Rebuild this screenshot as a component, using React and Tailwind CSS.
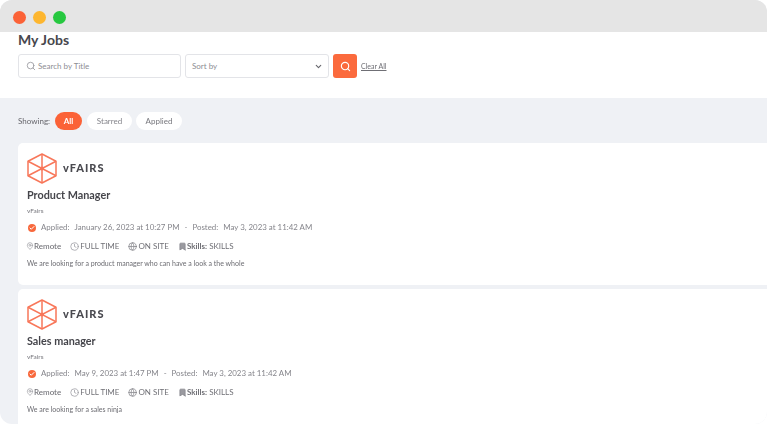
import { Search, ChevronDown, MapPin, Clock, Globe, Bookmark, Check } from 'lucide-react'

const jobs = [
  { title: 'Product Manager', company: 'vFairs', applied: 'January 26, 2023 at 10:27 PM', posted: 'May 3, 2023 at 11:42 AM', text: 'We are looking for a product manager who can have a look a the whole' },
  { title: 'Sales manager', company: 'vFairs', applied: 'May 9, 2023 at 1:47 PM', posted: 'May 3, 2023 at 11:42 AM', text: 'We are looking for a sales ninja' },
]

function Logo() {
  return (
    <svg width="30" height="31" viewBox="0 0 30 31" fill="none" stroke="#f8775a" strokeWidth="1.5" strokeLinejoin="round">
      <path d="M15 1 L29 8.25 V22.75 L15 30 L1 22.75 V8.25 Z" />
      <path d="M15 1 V30 M1 8.25 L29 22.75 M29 8.25 L1 22.75" />
      <circle cx="15" cy="15.5" r="1.2" fill="#f8775a" />
    </svg>
  )
}

function JobCard({ job }) {
  return (
    <div className="bg-white rounded-l-[5px] pl-[9px] pt-[10px] h-[142px] shrink-0">
      <div className="flex items-center gap-[5px] h-[31px]">
        <Logo />
        <span className="ml-[1px] text-[11px] font-black tracking-[1px] text-[#4a4a50]">vFAIRS</span>
      </div>
      <h2 className="mt-[4px] text-[10.8px] leading-[14px] font-bold text-[#45454b]">{job.title}</h2>
      <p className="mt-[5px] text-[6.5px] leading-[8px] text-[#77777d]">{job.company}</p>
      <div className="mt-[7px] flex items-center h-[12px] text-[7.9px] text-[#85858b]">
        <span className="w-[8px] h-[8px] rounded-full bg-[#f8683c] flex items-center justify-center ml-[1px] mr-[5px]">
          <Check size={6} color="#fff" strokeWidth={4} />
        </span>
        <span>Applied:</span>
        <span className="ml-[5px]">{job.applied}</span>
        <span className="mx-[5px]">-</span>
        <span>Posted:</span>
        <span className="ml-[5px]">{job.posted}</span>
      </div>
      <div className="mt-[6px] flex items-center h-[12px] text-[8px] text-[#707076]">
        <MapPin size={8} className="text-[#9a9aa0] -ml-[1px]" />
        <span className="font-medium">Remote</span>
        <Clock size={9} className="ml-[9px] text-[#9a9aa0]" />
        <span className="ml-[1px]">FULL TIME</span>
        <Globe size={9} className="ml-[9px] text-[#85858b]" />
        <span className="ml-[1px]">ON SITE</span>
        <Bookmark size={9} className="ml-[9px] text-[#85858b]" fill="#9a9aa0" />
        <span className="font-bold">Skills:</span>
        <span className="ml-[2px]">SKILLS</span>
      </div>
      <p className="mt-[7px] text-[7px] leading-[9px] text-[#6c6c72]">{job.text}</p>
    </div>
  )
}

export default function App() {
  return (
    <div className="h-[424px] w-[767px] overflow-hidden rounded-[12px] flex flex-col bg-[#eff1f5] font-['Lato',sans-serif] blur-[0.6px]">
      {/* window bar */}
      <div className="h-[32px] bg-[#e5e5e5] flex items-center gap-[7px] pl-[13px] pt-[2px] shrink-0">
        <span className="w-[13px] h-[13px] rounded-full bg-[#fb6237]" />
        <span className="w-[13px] h-[13px] rounded-full bg-[#fdb62f]" />
        <span className="w-[13px] h-[13px] rounded-full bg-[#27c840]" />
      </div>

      {/* header */}
      <div className="h-[66px] bg-white px-[18px] shrink-0">
        <h1 className="text-[14px] leading-[16px] font-bold text-[#47474d]">My Jobs</h1>
        <div className="mt-[6px] flex items-center">
          <div className="w-[163px] h-[24px] border-[1.5px] border-[#e3e4e8] rounded-[3px] flex items-center pl-[7px]">
            <Search size={10} className="text-[#97979d]" />
            <span className="ml-[2px] text-[8px] text-[#8d8d93]">Search by Title</span>
          </div>
          <div className="ml-[4px] w-[144px] h-[24px] border-[1.5px] border-[#e3e4e8] rounded-[3px] flex items-center justify-between pl-[6px] pr-[5px]">
            <span className="text-[8px] text-[#8d8d93]">Sort by</span>
            <ChevronDown size={9} className="text-[#66666c]" strokeWidth={3} />
          </div>
          <div className="ml-[4px] w-[24px] h-[24px] rounded-[3px] bg-[#fb6a3d] flex items-center justify-center">
            <Search size={11} color="#fff" strokeWidth={2.5} />
          </div>
          <span className="ml-[4px] text-[7px] underline text-[#6f6f75]">Clear All</span>
        </div>
      </div>

      {/* filter pills */}
      <div className="h-[45px] flex items-center pl-[18px] shrink-0">
        <span className="text-[8px] text-[#66666c] mr-[5px]">Showing:</span>
        <span className="w-[27px] h-[18px] rounded-full bg-[#fb6237] text-white text-[8px] font-bold flex items-center justify-center">All</span>
        <span className="ml-[5px] w-[45px] h-[18px] rounded-full bg-white text-[#85858b] text-[8px] flex items-center justify-center">Starred</span>
        <span className="ml-[4px] w-[46px] h-[18px] rounded-full bg-white text-[#77777d] text-[8px] flex items-center justify-center">Applied</span>
      </div>

      {/* job list */}
      <div className="flex flex-col gap-[4px] pl-[18px]">
        {jobs.map((job) => (
          <JobCard key={job.title} job={job} />
        ))}
      </div>
    </div>
  )
}
